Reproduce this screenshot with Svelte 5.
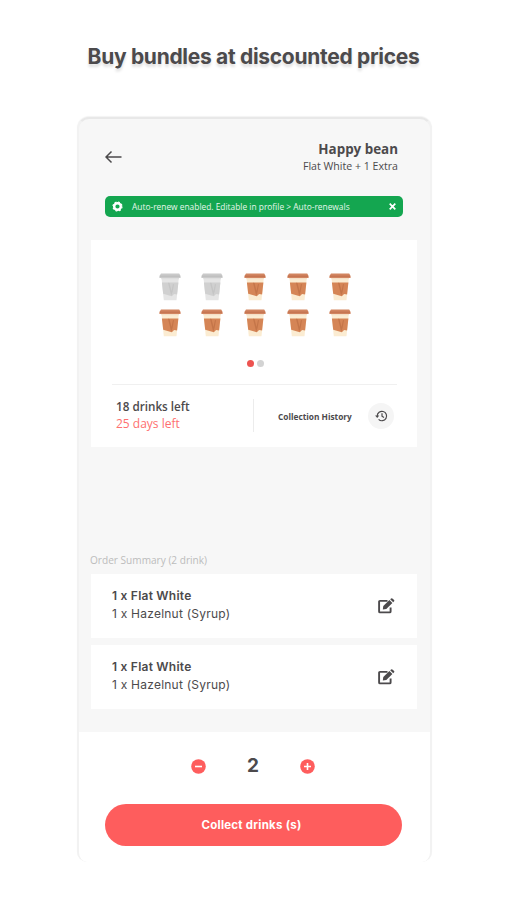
<script>
	let count = $state(2);
	let showBanner = $state(true);

	const cups = [false, false, true, true, true, true, true, true, true, true];
	const orders = [
		{ drink: "1 x Flat White", extra: "1 x Hazelnut (Syrup)" },
		{ drink: "1 x Flat White", extra: "1 x Hazelnut (Syrup)" }
	];
</script>

<main>
	<h1>Buy bundles at discounted prices</h1>
	<div class="phone">
		<header>
			<button class="back" aria-label="Back">
				<svg width="17" height="14" viewBox="0 0 17 14">
					<path d="M6.500 1.500L1 7l5.500 5.500M1 7h15.500" fill="none" stroke="#4c4a4c" stroke-width="1.500" />
				</svg>
			</button>
			<div class="shop">
				<h2>Happy bean</h2>
				<p>Flat White + 1 Extra</p>
			</div>
		</header>

		<div class="banner-slot">
			{#if showBanner}
				<div class="banner">
					<svg width="11" height="11" viewBox="0 0 11 11">
						<circle cx="5.500" cy="5.500" r="3.300" fill="none" stroke="#fff" stroke-width="2.400" />
						<circle cx="5.500" cy="5.500" r="4.500" fill="none" stroke="#fff" stroke-width="1.200" stroke-dasharray="1.900 1.634" />
					</svg>
					<span>Auto-renew enabled. Editable in profile &gt; Auto-renewals</span>
					<button aria-label="Close" onclick={() => (showBanner = false)}>
						<svg width="7" height="7" viewBox="0 0 7 7">
							<path d="M.7.700l5.600 5.600M6.300.700L.7 6.300" stroke="#fff" stroke-width="1.700" />
						</svg>
					</button>
				</div>
			{/if}
		</div>

		<section class="bundle">
			<div class="cups">
				{#each cups as full}
					<svg class:used={!full} class="cup" width="22" height="28" viewBox="0 0 22 28">
						<path class="body" d="M2.500 5h17.300L17.500 27.300H4.800z" />
						<path class="sleeve" d="M2.900 9.500h16.500l-1.300 12-3-.5-2.300 2.300-8.600-2.600z" />
						<path class="shade" d="M9 9.800l1.500.2 2 8 1.500-7 1 .3-1.500 8-1.300 3.500z" />
						<path class="rim" d="M2.300 5h17.600v1.200H2.300z" />
						<path class="lid" d="M2 .5h18.200L21.600 3v2H.4V3z" />
						<path class="lid-top" d="M1 2.700h20v.9H1z" />
					</svg>
				{/each}
			</div>
			<div class="dots"><i class="on"></i><i></i></div>
			<div class="info">
				<div class="left">
					<strong>18 drinks left</strong>
					<span>25 days left</span>
				</div>
				<div class="history">
					<b>Collection History</b>
					<button aria-label="Collection History">
						<svg width="13" height="12" viewBox="0 0 13 12">
							<path d="M2.200 6A4.700 4.700 0 1 1 3.600 9.400M7 3.300V6.200l2 1.400" fill="none" stroke="#4c4a4c" stroke-width="1.200" />
							<path d="M.1 5.500h4.200L2.200 7.900z" fill="#4c4a4c" />
						</svg>
					</button>
				</div>
			</div>
		</section>

		<h3>Order Summary (2 drink)</h3>
		<div class="orders">
			{#each orders as order}
				<div class="order">
					<div>
						<strong>{order.drink}</strong>
						<span>{order.extra}</span>
					</div>
					<button aria-label="Edit">
						<svg width="17" height="16" viewBox="0 0 17 16">
							<path d="M9.500 2.900H2q-.9 0-.9.900v9.700q0 .9.900.900h9.700q.9 0 .9-.9V9.500" fill="none" stroke="#4c4a4c" stroke-width="1.900" />
							<path d="M4.800 11.600l.5-3.600L11.400 2l3 3L8.300 11.100z" fill="#4c4a4c" />
							<path d="M12.200 1.300L13.100.500q.7-.5 1.300 0l1.700 1.600q.5.600 0 1.200L15.200 4.300z" fill="#4c4a4c" />
						</svg>
					</button>
				</div>
			{/each}
		</div>

		<footer>
			<div class="stepper">
				<button aria-label="Less" onclick={() => count--}>
					<svg width="15" height="15" viewBox="0 0 15 15">
						<circle cx="7.500" cy="7.500" r="7.300" fill="#fe5d5d" />
						<path d="M4 7.500h7" stroke="#fff" stroke-width="1.600" />
					</svg>
				</button>
				<span>{count}</span>
				<button aria-label="More" onclick={() => count++}>
					<svg width="15" height="15" viewBox="0 0 15 15">
						<circle cx="7.500" cy="7.500" r="7.300" fill="#fe5d5d" />
						<path d="M4 7.500h7M7.500 4v7" stroke="#fff" stroke-width="1.600" />
					</svg>
				</button>
			</div>
			<button class="collect">Collect drinks (s)</button>
		</footer>
	</div>
</main>

<style>
	:global(body) {
		background: #fff;
	}
	main {
		height: 900px;
		box-sizing: border-box;
		padding-top: 41px;
		color: #4c4a4c;
		font-family: "Open Sans", sans-serif;
		white-space: nowrap;
	}
	h1, h2, h3, p {
		margin: 0;
	}
	button {
		display: flex;
		align-items: center;
		justify-content: center;
		padding: 0;
		border: 0;
		background: none;
		cursor: pointer;
	}
	svg {
		display: block;
	}
	h1 {
		height: 76px;
		line-height: 32px;
		text-align: center;
		font-family: Inter, sans-serif;
		font-size: 21px;
		font-weight: 700;
		letter-spacing: -0.300px;
		text-shadow: 0 3px 3px #0002;
	}
	.phone {
		width: 355px;
		height: 745px;
		margin-left: 77px;
		box-sizing: border-box;
		border: 2px solid #f2f2f2;
		border-top-color: #e8e8e8;
		border-bottom: 0;
		border-radius: 12px 12px 10px 10px;
		background: #f7f7f7;
		box-shadow: 0 -1px 1px #0000000d;
		overflow: hidden;
	}
	header {
		display: flex;
		justify-content: space-between;
		height: 77px;
		box-sizing: border-box;
		padding: 20px 32px 0 26px;
	}
	.back {
		height: 36px;
	}
	.shop {
		padding-top: 1px;
		text-align: right;
	}
	h2 {
		font-size: 13.400px;
		line-height: 19px;
	}
	.shop p {
		font-size: 10.600px;
		line-height: 14px;
	}
	.banner-slot {
		height: 44px;
		padding: 0 27px 0 26px;
	}
	.banner {
		display: flex;
		align-items: center;
		height: 21px;
		padding: 0 7px;
		border-radius: 5px;
		background: #14a650;
		color: #e6f6ec;
		font-size: 8.400px;
	}
	.banner span {
		flex: 1;
		margin-left: 9px;
	}
	.bundle {
		width: 326px;
		height: 207px;
		margin-left: 12px;
		background: #fff;
	}
	.cups {
		display: grid;
		grid-template-columns: repeat(5, 22px);
		column-gap: 20.700px;
		row-gap: 8px;
		padding: 32.500px 0 0 67.500px;
	}
	.body { fill: #fbecd2; }
	.sleeve { fill: #d58556; }
	.shade { fill: #c47549; }
	.rim { fill: #f5dfc6; }
	.lid { fill: #d28560; }
	.lid-top { fill: #be6c4a; }
	.used .body { fill: #e5e5e5; }
	.used .sleeve { fill: #d0d0d0; }
	.used .shade { fill: #c5c5c5; }
	.used .rim { fill: #dedede; }
	.used .lid { fill: #cacaca; }
	.used .lid-top { fill: #bababa; }
	.dots {
		display: flex;
		justify-content: center;
		gap: 3px;
		margin: 23.500px 0 17px 2px;
	}
	.dots i {
		width: 7px;
		height: 7px;
		border-radius: 50%;
		background: #d3d3d3;
	}
	.dots .on {
		background: #ed5350;
	}
	.info {
		display: flex;
		height: 62px;
		box-sizing: border-box;
		margin: 0 20px 0 21px;
		padding-top: 14px;
		border-top: 1px solid #f0f0f0;
	}
	.left {
		width: 142px;
		height: 33px;
		box-sizing: border-box;
		padding-left: 4px;
		border-right: 1px solid #ececec;
	}
	.left strong, .left span, .order strong, .order span {
		display: block;
		font-size: 12px;
		line-height: 18px;
	}
	.left strong {
		margin-top: -2px;
		font-size: 11.700px;
		font-weight: 600;
	}
	.left span {
		color: #fe7070;
	}
	.history {
		display: flex;
		flex: 1;
		align-items: center;
		justify-content: space-between;
		height: 34px;
		padding: 0 3px 0 24px;
	}
	.history b {
		font-size: 8.300px;
	}
	.history button {
		width: 26px;
		height: 26px;
		border-radius: 50%;
		background: #f5f5f5;
	}
	h3 {
		margin-top: 105px;
		padding-left: 11px;
		font-size: 10.100px;
		font-weight: 400;
		line-height: 16px;
		color: #bcbcbc;
	}
	.orders {
		display: grid;
		gap: 7px;
		width: 326px;
		margin: 6px 0 0 12px;
	}
	.order {
		display: flex;
		align-items: center;
		justify-content: space-between;
		height: 64px;
		box-sizing: border-box;
		padding: 0 22px 1px 21px;
		background: #fff;
		font-family: Inter, sans-serif;
		letter-spacing: 0.230px;
	}
	.order div {
		margin-top: -1px;
	}
	.order strong {
		font-weight: 600;
	}
	footer {
		height: 130px;
		margin-top: 23px;
		padding: 0 27px 0 26px;
		background: #fff;
	}
	.stepper {
		display: flex;
		align-items: center;
		justify-content: center;
		gap: 40px;
		height: 72px;
		box-sizing: border-box;
		padding: 0 2px 4px 0;
	}
	.stepper span {
		width: 14px;
		text-align: center;
		font-family: Inter, sans-serif;
		font-size: 19px;
		font-weight: 700;
		line-height: 20px;
	}
	.collect {
		width: 297px;
		height: 42px;
		padding-right: 4px;
		border-radius: 21px;
		background: #fe5d5d;
		color: #fff;
		font-family: Inter, sans-serif;
		font-size: 11.500px;
		font-weight: 700;
		letter-spacing: 0.250px;
	}
</style>
